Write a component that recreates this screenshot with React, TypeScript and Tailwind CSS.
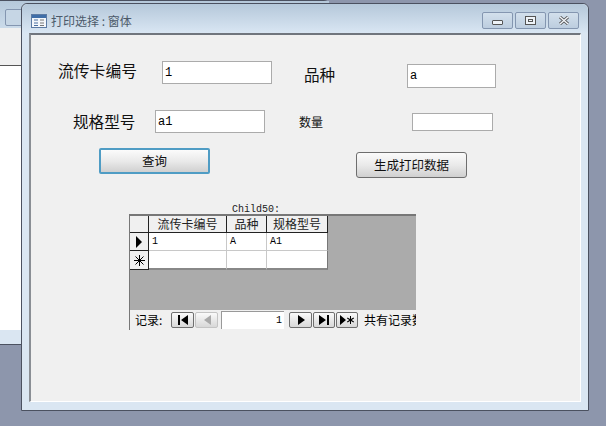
const cjk = "font-['Noto_Sans_CJK_SC','Liberation_Sans',sans-serif]";
const mono = "font-['Liberation_Mono','Noto_Sans_CJK_SC',monospace]";

const TextBox = ({ value, className }: { value?: string; className: string }) => (
  <div className={`flex items-center border border-[#ababab] bg-white pl-[2px] text-[12px] leading-none text-black ${mono} ${className}`}>
    {value}
  </div>
);

const CaptionButton = ({ children, className }: { children: React.ReactNode; className: string }) => (
  <div className={`flex h-[17px] items-center justify-center rounded-[2px] border border-[#8496b0] bg-gradient-to-b from-[#d3e0ec] to-[#bccddf] ${className}`}>
    {children}
  </div>
);

const NavButton = ({ d, disabled, wide }: { d: string; disabled?: boolean; wide?: boolean }) => (
  <div className={`flex h-[16px] items-center justify-center rounded-[2px] border bg-gradient-to-b from-[#fafafa] to-[#d8d8d8] ${wide ? 'w-[22px]' : 'w-[23px]'} ${disabled ? 'border-[#c4c4c4]' : 'border-[#6f6f6f]'}`}>
    <svg width="16" height="10" viewBox="0 0 16 10">
      <path d={d} fill={disabled ? '#a9a9a9' : '#000'} />
    </svg>
  </div>
);

const Cell = ({ children, className }: { children?: React.ReactNode; className: string }) => (
  <div className={`flex items-center border-r border-[#c8c8c8] bg-white pl-[3px] text-[10px] leading-none text-black ${mono} ${className}`}>
    {children}
  </div>
);

const Head = ({ children, className }: { children: React.ReactNode; className: string }) => (
  <div className={`flex h-[17px] items-center justify-center border-r border-b border-[#222] bg-[#f0f0f0] text-[12px] leading-none text-[#222] ${cjk} ${className}`}>
    {children}
  </div>
);

const Subform = () => (
  <div className="ml-[98px] flex h-[116px] w-[287px] flex-col border-t-2 border-l border-[#777] bg-[#ababab]">
    <div className="flex h-[17px]">
      <div className="h-[17px] w-[19px] border-r border-b border-[#222] bg-[#f0f0f0]" />
      <Head className="w-[78px]">流传卡编号</Head>
      <Head className="w-[40px]">品种</Head>
      <Head className="w-[61px]">规格型号</Head>
    </div>
    <div className="flex h-[18px]">
      <div className="flex w-[19px] items-center justify-center border-r border-b border-[#222] bg-[#f0f0f0]">
        <svg width="8" height="12" viewBox="0 0 8 12">
          <path d="M1 0 L7 6 L1 12 Z" fill="#000" />
        </svg>
      </div>
      <Cell className="w-[78px] border-b border-b-[#c8c8c8]">1</Cell>
      <Cell className="w-[40px] border-b border-b-[#c8c8c8]">A</Cell>
      <Cell className="w-[61px] border-b border-b-[#c8c8c8] border-r-[#777]">A1</Cell>
    </div>
    <div className="flex h-[19px]">
      <div className="flex w-[19px] items-center justify-center border-r border-b border-[#222] bg-[#f0f0f0] text-[14px] leading-none text-black">
        <svg width="11" height="11" viewBox="0 0 11 11" stroke="#000" strokeWidth="1">
          <path d="M5.5 0 V11 M0 5.5 H11 M1.5 1.5 L9.5 9.5 M9.5 1.5 L1.5 9.5" />
        </svg>
      </div>
      <Cell className="w-[78px] border-b-2 border-b-[#888]" />
      <Cell className="w-[40px] border-b-2 border-b-[#888]" />
      <Cell className="w-[61px] border-b-2 border-b-[#888] border-r-[#777]" />
    </div>
    <div className="flex-1" />
    <div className="flex h-[20px] items-center overflow-hidden whitespace-nowrap bg-[#f0f0f0] pl-[5px]">
      <span className={`w-[36px] shrink-0 text-[12px] leading-none text-black ${cjk}`}>记录:</span>
      <div className="flex shrink-0 gap-[1px]">
        <NavButton d="M3 0 H5 V10 H3 Z M13 0 V10 L6 5 Z" />
        <NavButton disabled d="M12 0 V10 L5 5 Z" />
      </div>
      <div className={`ml-[3px] flex h-[18px] w-[63px] shrink-0 items-center justify-end border-t border-l border-[#999] bg-white pr-[2px] text-[10px] leading-none ${mono}`}>1</div>
      <div className="ml-[5px] flex shrink-0 gap-[1px]">
        <NavButton d="M5 0 L12 5 L5 10 Z" />
        <NavButton wide d="M3 0 L10 5 L3 10 Z M11 0 H13 V10 H11 Z" />
        <NavButton wide d="M1 0 L7 5 L1 10 Z M11 1 H12 V4 L14.5 2.5 L15 3.4 L12.6 5 L15 6.6 L14.5 7.5 L12 6 V9 H11 V6 L8.5 7.5 L8 6.6 L10.4 5 L8 3.4 L8.5 2.5 L11 4 Z" />
      </div>
      <span className={`ml-[6px] shrink-0 text-[12px] leading-none text-black ${cjk}`}>共有记录数</span>
    </div>
  </div>
);

const FormWindow = () => (
  <div className="absolute top-[3px] left-[21px] flex h-[408px] w-[568px] flex-col rounded-t-[6px] border border-[#4b5160] bg-[#dae6f2]">
    <div className="flex h-[29px] shrink-0 items-center rounded-t-[6px] bg-gradient-to-b from-[#b5c8da] to-[#d9e6f3] px-[9px] pt-[4px]">
      <svg width="16" height="14" viewBox="0 0 16 14" className="shrink-0">
        <rect x="0.5" y="0.5" width="15" height="13" fill="#f4f7fb" stroke="#5d7ba4" />
        <rect x="1" y="1" width="14" height="3" fill="#3f6ea8" />
        <path d="M3 6 H7 M3 9 H7 M3 11.5 H7" stroke="#4a6fa0" />
        <path d="M9 6 H13 M9 9 H13 M9 11.5 H13" stroke="#777" />
      </svg>
      <span className={`ml-[4px] text-[12px] leading-none text-[#4c5a6a] ${cjk}`}>打印选择 : 窗体</span>
      <div className="ml-auto flex gap-[2px]">
        <CaptionButton className="w-[31px]">
          <div className="mt-[3px] h-[5px] w-[11px] rounded-[1px] border border-[#555] bg-[#eef3f8]" />
        </CaptionButton>
        <CaptionButton className="w-[31px]">
          <div className="flex h-[9px] w-[11px] items-center justify-center border border-[#555] bg-[#eef3f8]">
            <div className="h-[3px] w-[5px] border border-[#555]" />
          </div>
        </CaptionButton>
        <CaptionButton className="w-[31px]">
          <svg width="12" height="9" viewBox="0 0 12 9">
            <path d="M2 1 L10 8 M10 1 L2 8" stroke="#555" strokeWidth="3" />
            <path d="M2 1 L10 8 M10 1 L2 8" stroke="#f4f7fb" strokeWidth="1.4" />
          </svg>
        </CaptionButton>
      </div>
    </div>
    <div className="mx-[7px] mb-[8px] flex-1 border-t-2 border-r border-b border-l-2 border-t-[#70757d] border-r-white border-b-white border-l-[#8a8e94] bg-[#f0f0f0]">
      <div className="flex h-[171px]">
        <div className="w-[270px]">
          <div className="mt-[26px] flex h-[23px]">
            <span className={`mt-[-2px] ml-[27px] w-[104px] text-[15.8px] leading-[23px] text-[#111] ${cjk}`}>流传卡编号</span>
            <TextBox value="1" className="w-[110px]" />
          </div>
          <div className="mt-[26px] flex h-[23px]">
            <span className={`ml-[42px] w-[82px] text-[15.6px] leading-[23px] text-[#111] ${cjk}`}>规格型号</span>
            <TextBox value="a1" className="w-[110px]" />
          </div>
          <div className={`mt-[15px] ml-[68px] flex h-[26px] w-[111px] items-center justify-center rounded-[2px] border-2 border-[#4f9cc4] bg-gradient-to-b from-[#fbfbfb] via-[#eaeaea] to-[#d0d0d0] text-[12.5px] leading-none text-[#111] ${cjk}`}>
            查询
          </div>
        </div>
        <div className="flex-1">
          <div className="mt-[29px] flex h-[24px]">
            <span className={`mt-[-2px] ml-[3px] w-[103px] text-[15.6px] leading-[24px] text-[#111] ${cjk}`}>品种</span>
            <TextBox value="a" className="w-[89px]" />
          </div>
          <div className="mt-[25px] flex h-[18px]">
            <span className={`-ml-[2px] w-[113px] text-[12px] leading-[18px] text-[#111] ${cjk}`}>数量</span>
            <TextBox className="w-[81px]" />
          </div>
          <div className={`mt-[21px] ml-[55px] flex h-[26px] w-[111px] items-center justify-center rounded-[3px] border border-[#6e6e6e] bg-gradient-to-b from-[#fbfbfb] via-[#eaeaea] to-[#d0d0d0] text-[12.5px] leading-none text-[#111] ${cjk}`}>
            生成打印数据
          </div>
        </div>
      </div>
      <div className={`ml-[201px] h-[8px] text-[10px] leading-[8px] text-[#222] ${mono}`}>Child50:</div>
      <Subform />
    </div>
  </div>
);

const BackWindow = () => (
  <div className="absolute top-0 -left-[60px] flex h-[345px] w-[390px] flex-col rounded-t-[6px] border border-[#4b5160] bg-[#dae6f2]">
    <div className="flex h-[27px] items-center bg-gradient-to-b from-[#b5c8da] to-[#cbdbea]">
      <div className="mt-[6px] ml-[64px] h-[17px] w-[31px] rounded-[2px] border border-[#8496b0] bg-[#c6d6e5]" />
    </div>
    <div className="h-[37px] bg-[#f0f0f0]" />
    <div className="h-[265px] border-t border-[#555] bg-white" />
  </div>
);

export default function App() {
  return (
    <div className="relative h-[426px] w-[606px] overflow-hidden bg-[#8d96ac]">
      <BackWindow />
      <FormWindow />
    </div>
  );
}
